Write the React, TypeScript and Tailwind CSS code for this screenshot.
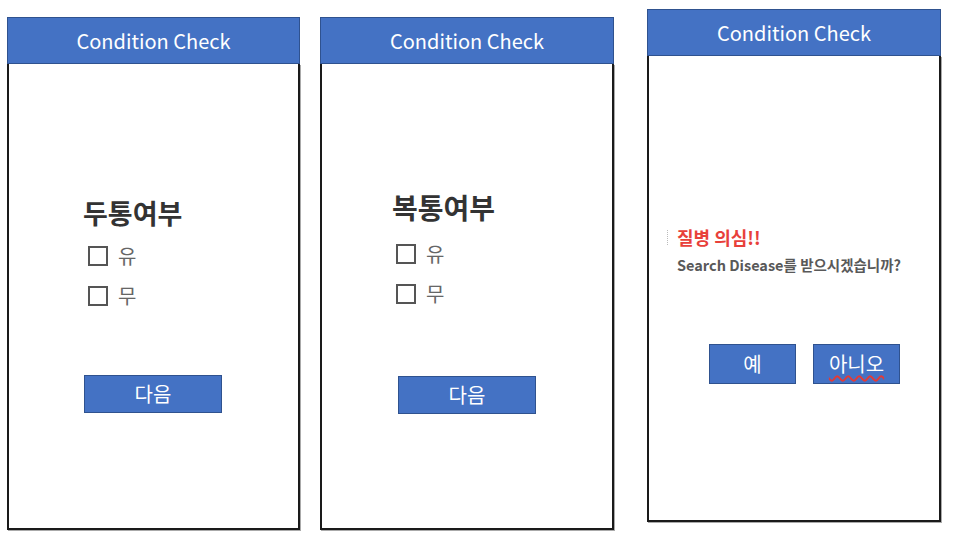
import React from "react";

const font = { fontFamily: '"Noto Sans CJK KR", "Noto Sans", sans-serif' };

function Header() {
  return (
    <div className="h-[47px] bg-[#4472C4] border border-[#2F528F] flex items-center justify-center text-white text-[20px]">
      Condition Check
    </div>
  );
}

function CheckRow({ label }: { label: string }) {
  return (
    <div className="flex items-center h-[20px]">
      <div className="w-[20px] h-[20px] border-2 border-[#555] bg-white" />
      <span className="ml-[10px] text-[20px] leading-none text-[#666]">{label}</span>
    </div>
  );
}

function QuestionPanel({
  title,
  titleCls,
  cbPl,
  cbMt,
  btnPl,
  btnMt,
}: {
  title: string;
  titleCls: string;
  cbPl: string;
  cbMt: string;
  btnPl: string;
  btnMt: string;
}) {
  return (
    <div className="flex flex-col">
      <Header />
      <div className="h-[466px] border-x-2 border-b-2 border-[#1a1a1a] bg-white shadow-[1px_1px_0_#aaa] flex flex-col">
        <div className={`${titleCls} font-bold leading-[32px] text-[#333]`}>{title}</div>
        <div className={`${cbPl} ${cbMt} flex flex-col gap-[20px]`}>
          <CheckRow label="유" />
          <CheckRow label="무" />
        </div>
        <div className={`${btnPl} ${btnMt}`}>
          <div className="w-[138px] h-[38px] bg-[#4472C4] border border-[#2F528F] flex items-center justify-center text-white text-[20px]">
            다음
          </div>
        </div>
      </div>
    </div>
  );
}

export default function App() {
  return (
    <div style={font} className="w-[963px] h-[550px] bg-white flex items-start pl-[7px]">
      <div className="w-[293px] mt-[17px]">
        <QuestionPanel
          title="두통여부"
          titleCls="pl-[74px] mt-[133px] text-[27px]"
          cbPl="pl-[79px]"
          cbMt="mt-[17px]"
          btnPl="pl-[75px]"
          btnMt="mt-[69px]"
        />
      </div>
      <div className="w-[294px] mt-[17px] ml-[20px]">
        <QuestionPanel
          title="복통여부"
          titleCls="pl-[70px] mt-[127px] text-[28px]"
          cbPl="pl-[74px]"
          cbMt="mt-[21px]"
          btnPl="pl-[76px]"
          btnMt="mt-[72px]"
        />
      </div>
      <div className="w-[294px] mt-[9px] ml-[33px] flex flex-col">
        <Header />
        <div className="h-[466px] border-x-2 border-b-2 border-[#1a1a1a] bg-white shadow-[1px_1px_0_#aaa] flex flex-col">
          <div className="mt-[170px] pl-[18px] flex items-center">
            <div className="h-[15px] border-l border-dotted border-[#bbb]" />
            <span className="ml-[9px] text-[18px] font-bold leading-[22px] text-[#E8403A]">질병 의심!!</span>
          </div>
          <div className="mt-[8px] pl-[28px] text-[14.5px] font-semibold leading-[18px] text-[#595959]">
            Search Disease를 받으시겠습니까?
          </div>
          <div className="mt-[70px] pl-[60px] flex gap-[17px]">
            <div className="w-[87px] h-[40px] bg-[#4472C4] border border-[#2F528F] flex items-center justify-center text-white text-[20px]">
              예
            </div>
            <div className="w-[87px] h-[40px] bg-[#4472C4] border border-[#2F528F] flex items-center justify-center text-white text-[20px]">
              <span className="underline decoration-wavy decoration-[#e53935] underline-offset-[3px]">아니오</span>
            </div>
          </div>
        </div>
      </div>
    </div>
  );
}
